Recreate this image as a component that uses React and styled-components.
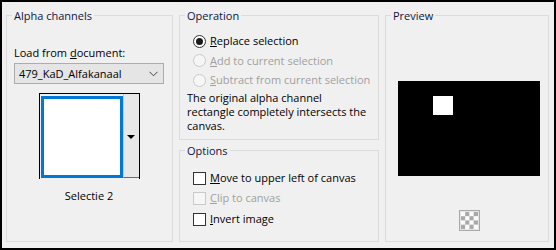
import React from "react";
import styled, { createGlobalStyle } from "styled-components";

const GlobalStyle = createGlobalStyle`
  html, body {
    margin: 0;
    padding: 0;
    background: #fff;
  }
  body {
    font-family: "Open Sans", "Noto Sans", sans-serif;
    font-size: 11px;
    color: #000;
  }
`;

const Frame = styled.div`
  width: 556px;
  height: 250px;
  box-sizing: border-box;
  border: 2px solid #000;
  background: #f0f0f0;
  padding: 5px 5px 6px 4px;
  display: flex;
  gap: 6px;
`;

const Column = styled.div`
  display: flex;
  flex-direction: column;
  gap: 2px;
  width: ${p => p.w}px;
`;

const Group = styled.fieldset`
  margin: 0;
  padding: 0;
  min-width: 0;
  box-sizing: border-box;
  border: 1px solid #dcdcdc;
  width: ${p => (p.w ? `${p.w}px` : "auto")};
  height: ${p => (p.h ? `${p.h}px` : "auto")};
  flex: ${p => (p.grow ? 1 : "none")};
`;

const Caption = styled.legend`
  margin-left: 5px;
  padding: 0 2px;
  line-height: 16px;
  position: relative;
  top: 1px;
  color: #0e1540;
`;

const AlphaBody = styled.div`
  padding: 22px 8px 0 7px;
  display: flex;
  flex-direction: column;
`;

const Label = styled.div`
  line-height: 16px;
`;

const Combo = styled.div`
  margin-top: 2px;
  height: 21px;
  box-sizing: border-box;
  border: 1px solid #acacac;
  background: #e5e5e5;
  display: flex;
  align-items: center;
  justify-content: space-between;
  padding: 0 5px 0 4px;
  line-height: 16px;
`;

const Swatch = styled.div`
  align-self: center;
  margin-top: 9px;
  width: 101px;
  height: 86px;
  box-sizing: border-box;
  border: 1px solid #000;
  border-bottom: none;
  padding: 2px 0 0 1px;
  display: flex;
`;

const SwatchFill = styled.div`
  width: 82px;
  height: 82px;
  box-sizing: border-box;
  border: 3px solid #0078d7;
  background: #fff;
`;

const SwatchButton = styled.div`
  width: 16px;
  height: 84px;
  margin-top: -2px;
  box-sizing: border-box;
  background: #e8e8e8;
  border-bottom: 1px solid #6a6a6a;
  border-left: 1px solid #c8c8c8;
  display: flex;
  align-items: center;
  justify-content: center;
`;

const Arrow = styled.div`
  width: 0;
  height: 0;
  border-left: 4px solid transparent;
  border-right: 4px solid transparent;
  border-top: 4px solid #000;
  margin-top: 2px;
`;

const SwatchName = styled.div`
  text-align: center;
  margin-top: 9px;
  line-height: 16px;
`;

const OpBody = styled.div`
  padding: 8px 4px 0 7px;
`;

const ChoiceList = styled.div`
  margin-left: 6px;
  display: flex;
  flex-direction: column;
`;

const Choice = styled.div`
  height: ${p => p.rowH || 20}px;
  display: flex;
  align-items: center;
  gap: 4px;
  line-height: 16px;
  color: ${p => (p.disabled ? "#a0a0a0" : "#000")};
`;

const Radio = styled.span`
  width: 13px;
  height: 13px;
  box-sizing: border-box;
  border-radius: 50%;
  border: 1px solid ${p => (p.disabled ? "#cacaca" : "#333")};
  background: ${p => (p.disabled ? "#f6f6f6" : "#fff")};
  display: flex;
  align-items: center;
  justify-content: center;
  &::after {
    content: "";
    width: 7px;
    height: 7px;
    border-radius: 50%;
    background: ${p => (p.checked ? "#1a1a1a" : "transparent")};
  }
`;

const Check = styled.span`
  width: 13px;
  height: 13px;
  box-sizing: border-box;
  border: 1px solid ${p => (p.disabled ? "#cacaca" : "#333")};
  background: ${p => (p.disabled ? "#f6f6f6" : "#fff")};
`;

const Note = styled.p`
  margin: 1px 0 0;
  line-height: 14px;
  white-space: nowrap;
`;

const OptBody = styled.div`
  padding: 10px 4px 0 13px;
  display: flex;
  flex-direction: column;
`;

const PreviewBody = styled.div`
  padding: 58px 0 0 4px;
  display: flex;
  flex-direction: column;
  align-items: center;
`;

const CheckerIcon = styled.svg`
  margin-top: 34px;
  display: block;
`;

const Chevron = () => (
  <svg width="9" height="6" viewBox="0 0 9 6">
    <path d="M0.5 0.8 L4.5 4.8 L8.5 0.8" fill="none" stroke="#444" strokeWidth="1" />
  </svg>
);

const Preview = () => (
  <svg width="142" height="95" viewBox="0 0 142 95" style={{ display: "block" }}>
    <rect x="0" y="0" width="142" height="95" fill="#000" />
    <rect x="35" y="15" width="20" height="19" fill="#fff" />
  </svg>
);

const Checker = () => {
  const cells = [];
  for (let r = 0; r < 4; r++) {
    for (let c = 0; c < 4; c++) {
      cells.push(
        <rect
          key={`${r}-${c}`}
          x={2 + c * 4.25}
          y={2 + r * 4.25}
          width="4.25"
          height="4.25"
          fill={(r + c) % 2 === 0 ? "#fafafa" : "#a9a9a9"}
        />
      );
    }
  }
  return (
    <CheckerIcon width="21" height="21" viewBox="0 0 21 21">
      <rect x="0.5" y="0.5" width="20" height="20" fill="#e6e6e6" stroke="#a8a8a8" />
      {cells}
    </CheckerIcon>
  );
};

export default function App() {
  return (
    <>
      <GlobalStyle />
      <Frame>
        <Group w={167}>
          <Caption>Alpha channels</Caption>
          <AlphaBody>
            <Label>
              Load from <u>d</u>ocument:
            </Label>
            <Combo>
              <span>479_KaD_Alfakanaal</span>
              <Chevron />
            </Combo>
            <Swatch>
              <SwatchFill />
              <SwatchButton>
                <Arrow />
              </SwatchButton>
            </Swatch>
            <SwatchName>Selectie 2</SwatchName>
          </AlphaBody>
        </Group>

        <Column w={200}>
          <Group h={133}>
            <Caption>Operation</Caption>
            <OpBody>
              <ChoiceList>
                <Choice>
                  <Radio checked />
                  <span>
                    <u>R</u>eplace selection
                  </span>
                </Choice>
                <Choice disabled rowH={19.5}>
                  <Radio disabled />
                  <span>
                    <u>A</u>dd to current selection
                  </span>
                </Choice>
                <Choice disabled rowH={19.5}>
                  <Radio disabled />
                  <span>
                    <u>S</u>ubtract from current selection
                  </span>
                </Choice>
              </ChoiceList>
              <Note>
                The original alpha channel
                <br />
                rectangle completely intersects the
                <br />
                canvas.
              </Note>
            </OpBody>
          </Group>
          <Group grow>
            <Caption>Options</Caption>
            <OptBody>
              <Choice>
                <Check />
                <span>
                  <u>M</u>ove to upper left of canvas
                </span>
              </Choice>
              <Choice disabled rowH={20.5}>
                <Check disabled />
                <span>
                  <u>C</u>lip to canvas
                </span>
              </Choice>
              <Choice rowH={21}>
                <Check />
                <span>
                  <u>I</u>nvert image
                </span>
              </Choice>
            </OptBody>
          </Group>
        </Column>

        <Group w={164}>
          <Caption>Preview</Caption>
          <PreviewBody>
            <Preview />
            <Checker />
          </PreviewBody>
        </Group>
      </Frame>
    </>
  );
}
